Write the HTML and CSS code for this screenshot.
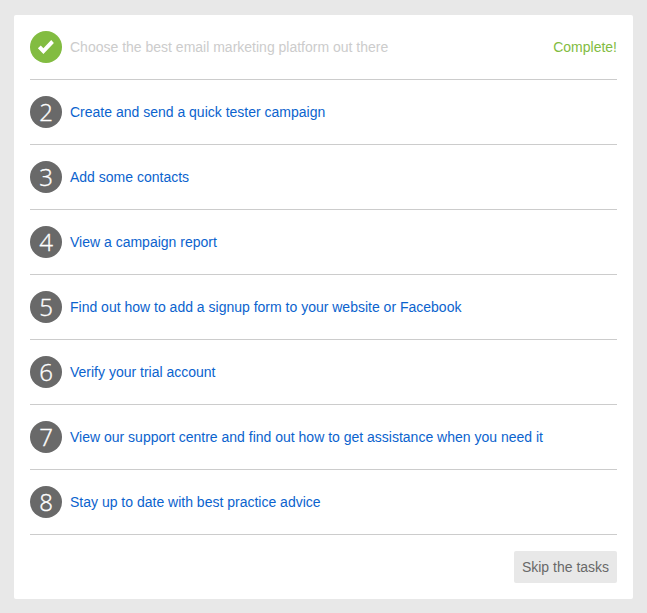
FILE: index.html
```html
<!DOCTYPE html>
<html lang="en">
<head>
<meta charset="utf-8">
<title>Getting started</title>
<link rel="stylesheet" href="styles.css">
</head>
<body>
<main class="card">
  <ol class="tasks">
    <li class="task task-done">
      <span class="badge badge-done"><svg viewBox="0 0 32 32" width="32" height="32" aria-hidden="true"><path d="M21.2 9.1 L23.9 12 L13.4 23 L7.9 17.3 L10.8 14.6 L13.4 17.3 Z" fill="#fff"/></svg></span>
      <span class="label">Choose the best email marketing platform out there</span>
      <span class="status">Complete!</span>
    </li>
    <li class="task"><span class="badge">2</span><a class="label">Create and send a quick tester campaign</a></li>
    <li class="task"><span class="badge">3</span><a class="label">Add some contacts</a></li>
    <li class="task"><span class="badge">4</span><a class="label">View a campaign report</a></li>
    <li class="task"><span class="badge">5</span><a class="label">Find out how to add a signup form to your website or Facebook</a></li>
    <li class="task"><span class="badge">6</span><a class="label">Verify your trial account</a></li>
    <li class="task"><span class="badge">7</span><a class="label">View our support centre and find out how to get assistance when you need it</a></li>
    <li class="task"><span class="badge">8</span><a class="label">Stay up to date with best practice advice</a></li>
  </ol>
  <div class="actions"><button class="skip" type="button">Skip the tasks</button></div>
</main>
</body>
</html>
```
FILE: styles.css
```css
* {
  box-sizing: border-box;
}

body {
  margin: 0;
  padding: 15px 14px 14px;
  background: #e8e8e8;
  font: 14px/20px "Liberation Sans", Arial, sans-serif;
}

.card {
  height: 584px;
  padding: 0 16px;
  background: #fff;
  border-radius: 2px;
}

.tasks {
  margin: 0;
  padding: 0;
  list-style: none;
}

.task {
  display: flex;
  align-items: center;
  height: 65px;
  border-bottom: 1px solid #ccc;
  color: #0b63ce;
}

.task-done {
  color: #ccc;
}

.badge {
  flex: none;
  width: 32px;
  height: 32px;
  margin-right: 8px;
  border-radius: 50%;
  background: #696969;
  color: #fff;
  font: 300 24px/31px "Open Sans", "Noto Sans", sans-serif;
  text-align: center;
  -webkit-text-stroke: 0.35px #fff;
}

.badge-done {
  background: #82bc41;
}

.badge svg {
  display: block;
}

.status {
  margin-left: auto;
  color: #82bc41;
}

.actions {
  display: flex;
  justify-content: flex-end;
  padding-top: 16px;
}

.skip {
  width: 103px;
  height: 32px;
  padding: 0;
  border: 0;
  border-radius: 2px;
  background: #e8e8e8;
  color: #696969;
  font: inherit;
}
```
